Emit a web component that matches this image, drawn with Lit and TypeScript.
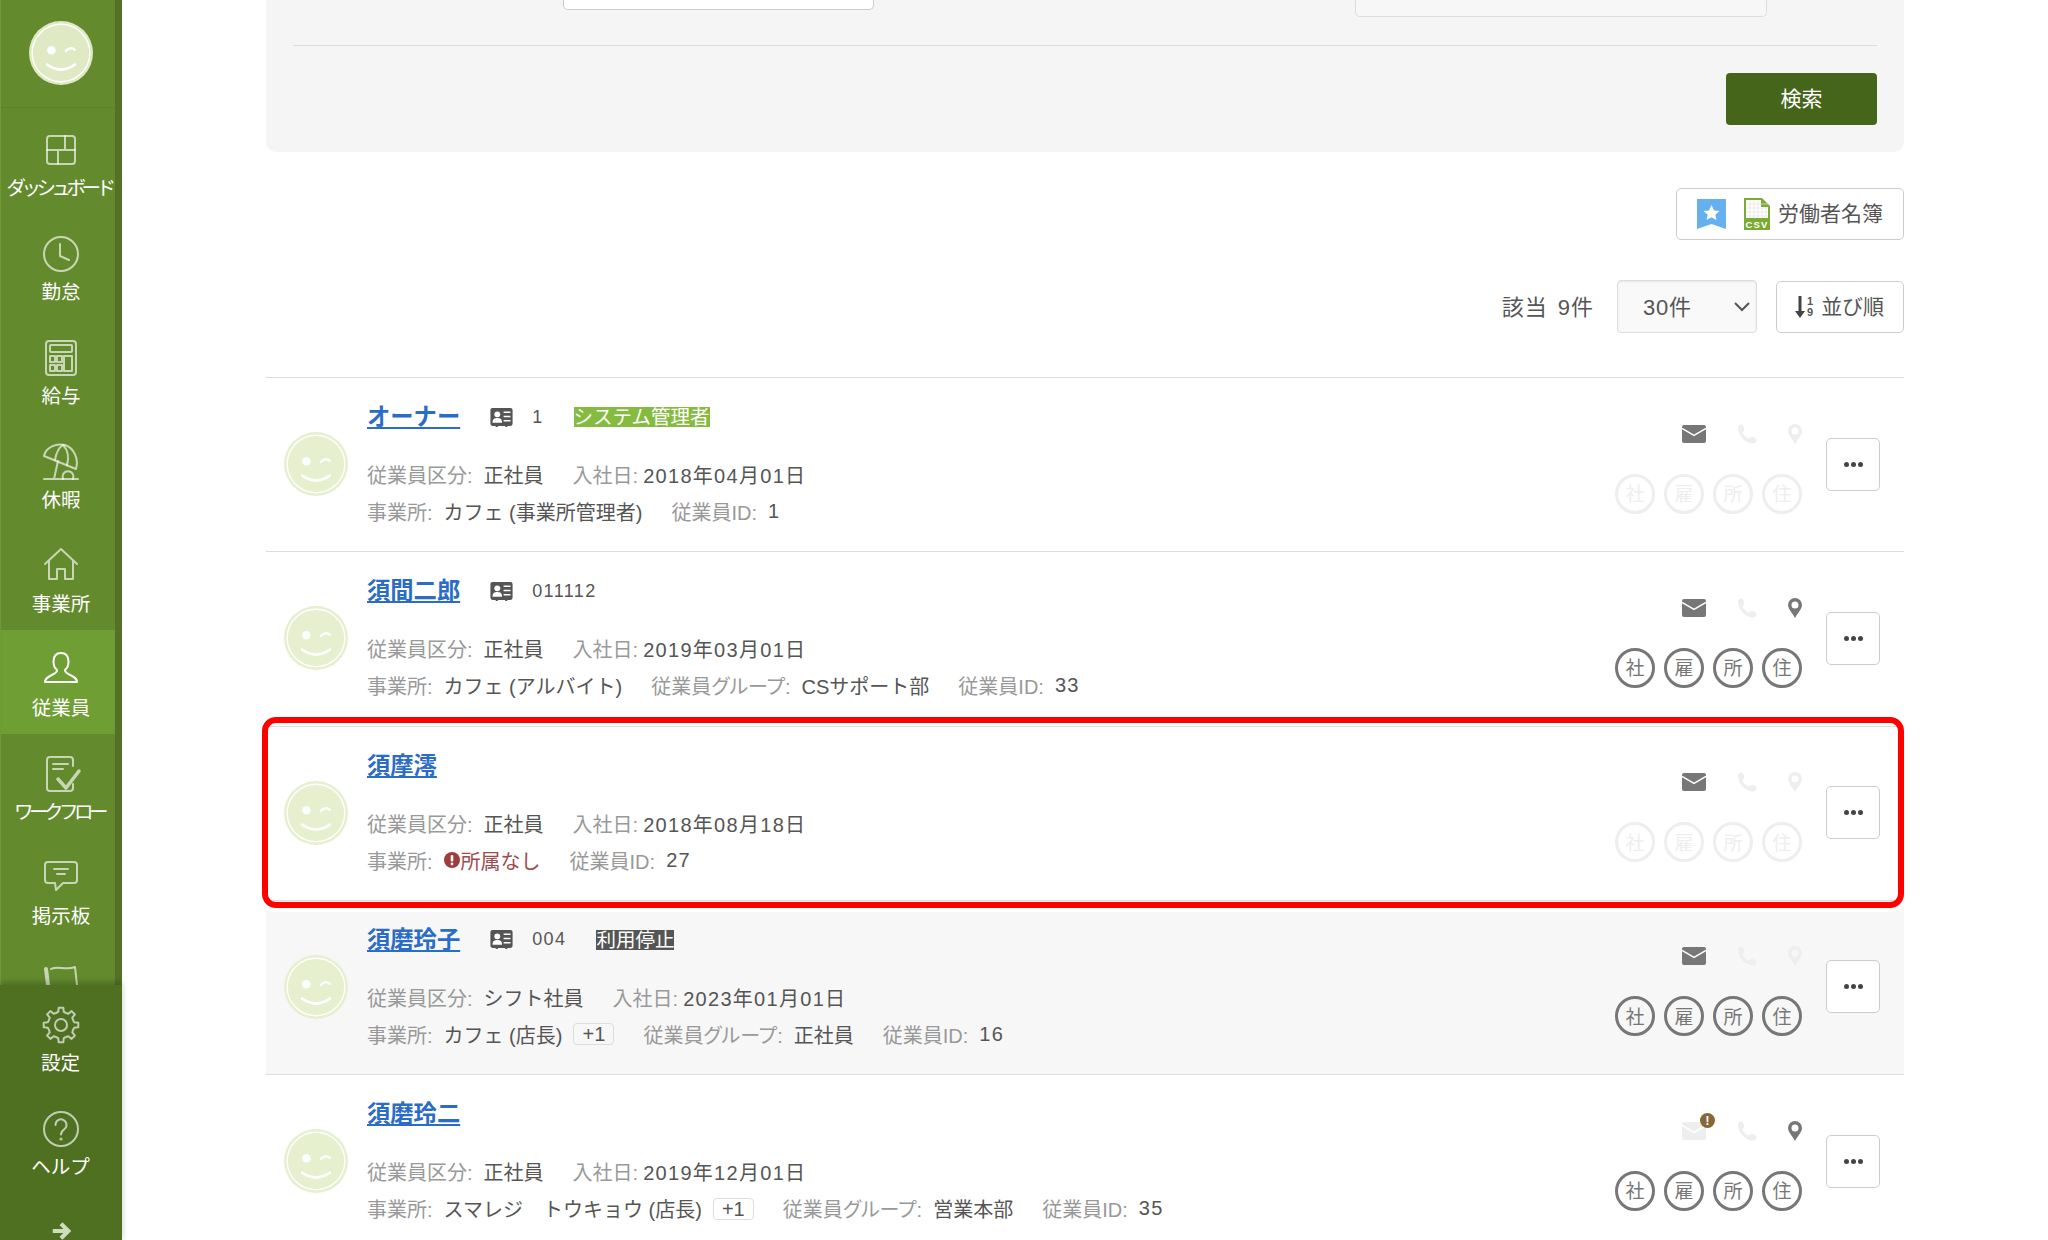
import { LitElement, html, css, svg } from "lit";
import { customElement } from "lit/decorators.js";
import { classMap } from "lit/directives/class-map.js";

type Field = { label: string; value?: string; tight?: boolean; num?: boolean; extra?: string; missing?: boolean };
type Employee = {
  name: string;
  code?: string;
  tag?: { text: string; kind: "admin" | "stop" };
  line1: Field[];
  line2: Field[];
  mail: boolean;
  mailWarn?: boolean;
  pin: boolean;
  docs: boolean;
  highlight?: boolean;
  stopped?: boolean;
};

const employees: Employee[] = [
  {
    name: "オーナー",
    code: "1",
    tag: { text: "システム管理者", kind: "admin" },
    line1: [
      { label: "従業員区分:", value: "正社員" },
      { label: "入社日:", value: "2018年04月01日", tight: true, num: true },
    ],
    line2: [
      { label: "事業所:", value: "カフェ (事業所管理者)" },
      { label: "従業員ID:", value: "1", num: true },
    ],
    mail: true,
    pin: false,
    docs: false,
  },
  {
    name: "須間二郎",
    code: "011112",
    line1: [
      { label: "従業員区分:", value: "正社員" },
      { label: "入社日:", value: "2019年03月01日", tight: true, num: true },
    ],
    line2: [
      { label: "事業所:", value: "カフェ (アルバイト)" },
      { label: "従業員グループ:", value: "CSサポート部" },
      { label: "従業員ID:", value: "33", num: true },
    ],
    mail: true,
    pin: true,
    docs: true,
  },
  {
    name: "須摩澪",
    line1: [
      { label: "従業員区分:", value: "正社員" },
      { label: "入社日:", value: "2018年08月18日", tight: true, num: true },
    ],
    line2: [
      { label: "事業所:", missing: true },
      { label: "従業員ID:", value: "27", num: true },
    ],
    mail: true,
    pin: false,
    docs: false,
    highlight: true,
  },
  {
    name: "須磨玲子",
    code: "004",
    tag: { text: "利用停止", kind: "stop" },
    line1: [
      { label: "従業員区分:", value: "シフト社員" },
      { label: "入社日:", value: "2023年01月01日", tight: true, num: true },
    ],
    line2: [
      { label: "事業所:", value: "カフェ (店長)", extra: "+1" },
      { label: "従業員グループ:", value: "正社員" },
      { label: "従業員ID:", value: "16", num: true },
    ],
    mail: true,
    pin: false,
    docs: true,
    stopped: true,
  },
  {
    name: "須磨玲二",
    line1: [
      { label: "従業員区分:", value: "正社員" },
      { label: "入社日:", value: "2019年12月01日", tight: true, num: true },
    ],
    line2: [
      { label: "事業所:", value: "スマレジ　トウキョウ (店長)", extra: "+1" },
      { label: "従業員グループ:", value: "営業本部" },
      { label: "従業員ID:", value: "35", num: true },
    ],
    mail: false,
    mailWarn: true,
    pin: true,
    docs: true,
  },
];

const gearPath = () => {
  const teeth = 8;
  const pts: string[] = [];
  for (let i = 0; i < teeth; i++) {
    const a = (i / teeth) * Math.PI * 2 - Math.PI / 2;
    const step = (Math.PI * 2) / teeth;
    const add = (r: number, t: number) =>
      pts.push(`${(18 + r * Math.cos(a + t)).toFixed(1)} ${(18 + r * Math.sin(a + t)).toFixed(1)}`);
    add(13, -step * 0.5);
    add(13.5, -step * 0.27);
    add(17.5, -step * 0.17);
    add(17.5, step * 0.17);
    add(13.5, step * 0.27);
  }
  return `M${pts.join("L")}Z`;
};

const navIcons: Record<string, unknown> = {
  dashboard: svg`<rect x="4" y="4" width="28" height="28" rx="3"/><path d="M4 18H32M22 4V18M15 18V32"/>`,
  clock: svg`<circle cx="18" cy="18" r="17"/><path d="M17 8V20L26 24"/>`,
  calc: svg`<rect x="3" y="1" width="30" height="34" rx="3"/><rect x="7" y="5" width="22" height="7" rx="1"/><rect x="7" y="16" width="5" height="6"/><rect x="14" y="16" width="5" height="6"/><rect x="21" y="16" width="8" height="15"/><rect x="7" y="25" width="5" height="6"/><rect x="14" y="25" width="5" height="6"/>`,
  beach: svg`<path d="M1 12C3 3 13-1 22 1C31 4 36 15 33 25Z"/><path d="M20 1C15 4 13 10 12 16M20 1C25 6 26 14 24 21M15 17L11 35M1 35H35"/><path d="M20 35A5.5 5.5 0 1 1 30 35"/>`,
  house: svg`<path d="M2 16L18 1L34 16M6 12V31H14V21H22V31H30V12"/>`,
  person: svg`<path d="M18 1C12.500 1 10.500 5 10.500 9.500C10.500 13.500 12 16.500 14 18C14.500 21 10 22 7 24C4 25.500 2 27 2 30H34C34 27 32 25.500 29 24C26 22 21.500 21 22 18C24 16.500 25.500 13.500 25.500 9.500C25.500 5 23.500 1 18 1Z"/>`,
  flow: svg`<path d="M30 10V4a3 3 0 0 0-3-3H7a3 3 0 0 0-3 3V32a3 3 0 0 0 3 3H27a3 3 0 0 0 3-3V28M10 8H25M10 13H20"/><path d="M15 23L23 32L36 15" stroke-width="3.500"/>`,
  chat: svg`<path d="M5 2H31a3 3 0 0 1 3 3V20a3 3 0 0 1-3 3H20L13 30L12 23H5a3 3 0 0 1-3-3V5a3 3 0 0 1 3-3Z"/><path d="M11 9H25M14 14H22"/>`,
  flag: svg`<path d="M3 5L7 36" stroke-width="4"/><path d="M8 5C15 1 22 7 32 3L35 30"/>`,
  gear: svg`<path d=${gearPath()}/><circle cx="18" cy="18" r="6"/>`,
  help: svg`<circle cx="18" cy="18" r="17"/><path d="M12.500 14A5.500 5.500 0 1 1 21 18.500C19 20 18 21 18 23.500"/><circle cx="18" cy="28" r="0.600"/>`,
};

const face = (fill: string) => svg`
  <circle cx="30" cy="30" r="30" fill=${fill}/>
  <circle cx="30" cy="30" r="27" fill="none" stroke="#fff" stroke-width="1.300"/>
  <circle cx="21" cy="27.500" r="4" fill="#fff"/>
  <path d="M34.500 28Q39 23.500 43 27" fill="none" stroke="#fff" stroke-width="2.200" stroke-linecap="round"/>
  <path d="M17 41Q30 50 43 41" fill="none" stroke="#fff" stroke-width="2.600" stroke-linecap="round"/>`;

@customElement("app-root")
export class AppRoot extends LitElement {
  static styles = css`
    :host {
      display: block;
      height: 1240px;
      overflow: hidden;
      background: #fff;
      font-family: "Liberation Sans", "Noto Sans CJK JP", sans-serif;
      color: #555;
    }
    .shell {
      display: flex;
      height: 1240px;
    }

    /* sidebar */
    .sidebar {
      width: 122px;
      flex-shrink: 0;
      display: flex;
      flex-direction: column;
      height: 1240px;
      background: #4f7021;
    }
    .nav {
      height: 985px;
      flex-shrink: 0;
      overflow: hidden;
      background: #638b2e;
      border-right: 7px solid #537227;
      border-left: 1px solid #6f9a38;
      box-sizing: border-box;
    }
    .brand {
      height: 108px;
      border-bottom: 1px solid #5b8229;
      display: flex;
      justify-content: center;
      padding: 21px 0 0 6px;
      box-sizing: border-box;
      margin-bottom: 2px;
    }
    .brand svg {
      width: 64px;
      height: 64px;
    }
    .item {
      height: 104px;
      width: 114px;
      display: flex;
      flex-direction: column;
      align-items: center;
      padding: 22px 0 0 6px;
      box-sizing: border-box;
      color: #fff;
      font-size: 19.500px;
      line-height: 28px;
      white-space: nowrap;
    }
    .item.active {
      background: #6f9f34;
    }
    .item svg {
      width: 36px;
      height: 36px;
      fill: none;
      stroke: rgba(255, 255, 255, 0.65);
      stroke-width: 2;
      stroke-linecap: round;
      stroke-linejoin: round;
      overflow: visible;
      margin-bottom: 6px;
    }
    .item.active svg {
      stroke: #fff;
    }
    .item span.tight {
      letter-spacing: -4.500px;
      margin-left: -4px;
    }
    .foot {
      position: relative;
      flex: 1;
      box-shadow: 0 -3px 6px rgba(0, 0, 0, 0.22);
      padding-top: 0;
    }
    .foot .item {
      padding-left: 7px;
    }
    .back {
      display: flex;
      justify-content: center;
      width: 114px;
      padding-left: 8px;
      box-sizing: border-box;
      margin-top: 27px;
    }
    .back svg {
      width: 22px;
      height: 22px;
      fill: none;
      stroke: #cfdcc0;
      stroke-width: 4.500;
    }

    /* main */
    .main {
      flex: 1;
      min-width: 0;
      padding: 0 144px 0 144px;
    }
    .panel {
      background: #f5f5f5;
      border-radius: 0 0 10px 10px;
      padding: 0 27px 27px 27px;
      height: 152px;
      box-sizing: border-box;
    }
    .stubs {
      display: flex;
      align-items: flex-start;
      height: 45px;
      border-bottom: 1px solid #ddd;
      box-sizing: content-box;
      padding-left: 270px;
    }
    .stub {
      box-sizing: border-box;
      border: 1px solid #ccc;
      border-top: none;
      border-radius: 0 0 5px 5px;
    }
    .stub.a {
      width: 311px;
      height: 10px;
      background: #fff;
    }
    .stub.b {
      width: 412px;
      height: 17px;
      margin-left: 481px;
      border-color: #ddd;
      background: #f7f7f7;
    }
    .actions {
      display: flex;
      justify-content: flex-end;
      padding-top: 27px;
    }
    .search {
      width: 151px;
      height: 52px;
      padding-bottom: 5px;
      box-sizing: border-box;
      background: #45651b;
      border-radius: 4px;
      color: #fff;
      font-size: 21px;
      display: flex;
      align-items: center;
      justify-content: center;
    }
    .tools {
      display: flex;
      justify-content: flex-end;
      padding-top: 36px;
    }
    .btn {
      box-sizing: border-box;
      border: 1px solid #ccc;
      border-radius: 5px;
      background: #fff;
      font-size: 21px;
      display: flex;
      align-items: center;
      white-space: nowrap;
    }
    .roster {
      width: 228px;
      height: 52px;
      padding-left: 20px;
      padding-bottom: 4px;
    }
    .roster svg {
      margin-top: 4px;
    }
    .roster .mark {
      width: 29px;
      height: 30px;
      margin-right: 18px;
    }
    .roster .csv {
      width: 26px;
      height: 32px;
      margin-right: 8px;
    }
    .sortbar {
      display: flex;
      justify-content: flex-end;
      align-items: center;
      padding-top: 40px;
      height: 53px;
      box-sizing: content-box;
      margin-bottom: 44px;
    }
    .count {
      font-size: 22px;
      letter-spacing: 1px;
      word-spacing: 3px;
      margin-right: 23px;
      padding-bottom: 3px;
    }
    .select {
      box-sizing: border-box;
      width: 140px;
      height: 53px;
      border: 1px solid #ddd;
      border-radius: 4px;
      background: #f9f9f9;
      box-shadow: inset 0 1px 2px rgba(0, 0, 0, 0.08);
      display: flex;
      align-items: center;
      justify-content: space-between;
      padding: 0 5px 0 25px;
      font-size: 22px;
      letter-spacing: 0.800px;
      margin-right: 19px;
    }
    .select span {
      padding-bottom: 3px;
    }
    .select svg {
      width: 18px;
      height: 12px;
      fill: none;
      stroke: #555;
      stroke-width: 2;
    }
    .sort {
      width: 128px;
      height: 52px;
      padding-left: 18px;
      padding-bottom: 3px;
    }
    .sort .arrow {
      width: 10px;
      height: 22px;
      fill: #444;
      margin: 3px 2px 0 0;
    }
    .sort .nums {
      display: flex;
      flex-direction: column;
      font-size: 11px;
      line-height: 11px;
      font-weight: 700;
      margin: 3px 8px 0 0;
    }

    /* rows */
    .list {
      border-top: 1px solid #ddd;
    }
    .row {
      position: relative;
      box-sizing: border-box;
      height: 174.250px;
      border-bottom: 1px solid #ddd;
      display: flex;
      align-items: center;
      padding: 0 24px 0 18px;
    }
    .row.stopped {
      background: #f7f7f7;
    }
    .avatar {
      width: 64px;
      height: 64px;
      flex-shrink: 0;
      margin: -1px 19px 0 0;
    }
    .body {
      flex: 1;
      min-width: 0;
      align-self: flex-start;
      padding-top: 24px;
    }
    .head {
      display: flex;
      align-items: center;
      height: 30px;
      margin-bottom: 24px;
    }
    .name {
      color: #2a6cc6;
      font-size: 23.300px;
      font-weight: 700;
      text-decoration: underline;
      line-height: 30px;
    }
    .card {
      width: 23px;
      height: 19px;
      margin-left: 30px;
      margin-right: 19px;
    }
    .code {
      font-size: 18px;
      letter-spacing: 1.400px;
      margin-right: 30px;
    }
    .tag {
      font-size: 19.500px;
      line-height: 20px;
      height: 20px;
      color: #fff;
    }
    .tag.admin {
      background: #85bb3f;
    }
    .tag.stop {
      background: #555;
    }
    .line {
      display: flex;
      align-items: center;
      height: 37px;
      font-size: 20px;
      white-space: nowrap;
    }
    .field {
      display: flex;
      align-items: center;
      margin-right: 29px;
    }
    .label {
      color: #999;
      margin-right: 11px;
      font-feature-settings: "palt";
    }
    .field.tight .label {
      margin-right: 5px;
    }
    .num {
      letter-spacing: 1.300px;
    }
    .more {
      box-sizing: border-box;
      border: 1px solid #ddd;
      border-radius: 4px;
      height: 22px;
      width: 41px;
      margin-left: 11px;
      font-size: 20px;
      line-height: 20px;
      text-align: center;
      background: #fff;
    }
    .stopped .more {
      background: #f7f7f7;
    }
    .missing {
      display: flex;
      align-items: center;
      color: #a04a4a;
    }
    .missing svg {
      width: 16px;
      height: 16px;
      margin-right: 1px;
    }
    .status {
      display: flex;
      flex-direction: column;
      align-items: flex-end;
      margin-top: 8px;
      margin-right: 24px;
      width: 187px;
      flex-shrink: 0;
    }
    .contact {
      display: flex;
      align-items: center;
      height: 20px;
      margin-bottom: 30px;
    }
    .contact svg {
      display: block;
    }
    .ic {
      fill: #777;
    }
    .ic.off {
      fill: #eee;
    }
    .mailbox {
      position: relative;
      width: 24px;
      height: 18px;
    }
    .mailbox svg {
      width: 24px;
      height: 18px;
    }
    .warn {
      position: absolute;
      right: -9px;
      top: -9px;
      width: 15px;
      height: 15px;
      border-radius: 50%;
      background: #85683a;
      color: #fff;
      font-size: 13px;
      font-weight: 700;
      line-height: 15px;
      text-align: center;
    }
    .phone {
      width: 20px;
      height: 20px;
      margin-left: 31px;
    }
    .pin {
      width: 14px;
      height: 20px;
      margin-left: 31px;
    }
    .docs {
      display: flex;
      gap: 9px;
    }
    .doc {
      box-sizing: border-box;
      width: 40px;
      height: 40px;
      border-radius: 50%;
      border: 3px solid #777;
      color: #777;
      font-size: 19px;
      padding-bottom: 2px;
      display: flex;
      align-items: center;
      justify-content: center;
    }
    .doc.off {
      border-color: #eee;
      color: #eee;
    }
    .dots {
      box-sizing: border-box;
      width: 54px;
      height: 53px;
      margin-top: -1px;
      border: 1px solid #ccc;
      border-radius: 5px;
      background: #fff;
      display: flex;
      align-items: center;
      justify-content: center;
      gap: 2px;
      flex-shrink: 0;
    }
    .dots i {
      width: 5px;
      height: 5px;
      border-radius: 50%;
      background: #444;
    }
    .focus {
      position: absolute;
      left: -4px;
      right: 0;
      top: -10px;
      bottom: -8px;
      border: 6px solid #f00;
      border-radius: 14px;
      box-shadow: 0 0 0 4px #fff;
      z-index: 2;
      pointer-events: none;
    }
  `;

  private navItem(icon: string, label: string, active = false, tight = false) {
    return html`<div class=${classMap({ item: true, active })}>
      <svg viewBox="0 0 36 36">${navIcons[icon]}</svg>
      <span class=${tight ? "tight" : ""}>${label}</span>
    </div>`;
  }

  private renderField(f: Field) {
    return html`<div class=${classMap({ field: true, tight: !!f.tight })}>
      <span class="label">${f.label}</span>
      ${f.missing
        ? html`<span class="missing">
            <svg viewBox="0 0 16 16">
              <circle cx="8" cy="8" r="8" fill="#a03c3c" />
              <rect x="6.700" y="3" width="2.600" height="6.500" rx="1" fill="#fff" />
              <circle cx="8" cy="12" r="1.400" fill="#fff" />
            </svg>所属なし</span
          >`
        : html`<span class=${f.num ? "num" : ""}>${f.value}</span>`}
      ${f.extra ? html`<span class="more">${f.extra}</span>` : null}
    </div>`;
  }

  private renderRow(e: Employee) {
    const off = e.docs ? "" : "off";
    return html`<div class=${classMap({ row: true, stopped: !!e.stopped })}>
      <svg class="avatar" viewBox="0 0 60 60">${face("#e6f0cf")}</svg>
      <div class="body">
        <div class="head">
          <a class="name">${e.name}</a>
          ${e.code
            ? html`<svg class="card" viewBox="0 0 21 18">
                  <path
                    d="M2 0H19a2 2 0 0 1 2 2V15a2 2 0 0 1-2 2H16V18H14V17H7V18H5V17H2a2 2 0 0 1-2-2V2a2 2 0 0 1 2-2Z"
                    fill="#555"
                  />
                  <circle cx="6.500" cy="6" r="2.800" fill="#fff" />
                  <path d="M2 14C2 10 4 9.500 6.500 9.500S11 10 11 14Z" fill="#fff" />
                  <path d="M12.500 4H19M12.500 8H19M12.500 12H19" stroke="#fff" stroke-width="1.500" />
                </svg>
                <span class="code">${e.code}</span>`
            : null}
          ${e.tag ? html`<span class="tag ${e.tag.kind}">${e.tag.text}</span>` : null}
        </div>
        <div class="line">${e.line1.map((f) => this.renderField(f))}</div>
        <div class="line">${e.line2.map((f) => this.renderField(f))}</div>
      </div>
      <div class="status">
        <div class="contact">
          <div class="mailbox">
            <svg viewBox="0 0 24 18">
              <rect class="ic ${e.mail ? "" : "off"}" width="24" height="18" rx="2" />
              <path d="M0 3.500L12 10.500L24 3.500" fill="none" stroke="#fff" stroke-width="1.500" />
            </svg>
            ${e.mailWarn ? html`<span class="warn">!</span>` : null}
          </div>
          <svg class="phone" viewBox="0 0 20 20">
            <path
              class="ic off"
              d="M1 3C1 1.500 3.500 0 5 .5C6 1 7.500 5 7.300 6C7 7 5.500 7.500 5.500 8.500C6 11 9.500 14 12 14.500C13 14.500 13.500 13 14.500 12.800C15.500 12.600 19.500 14.500 19.500 15.500C20 17 18 19.500 16.500 19.500C8 19.500 1 11.500 1 3Z"
            />
          </svg>
          <svg class="pin" viewBox="0 0 14 20">
            <path
              class="ic ${e.pin ? "" : "off"}"
              fill-rule="evenodd"
              d="M7 0A7 7 0 0 1 14 7C14 11 9 16 7 20C5 16 0 11 0 7A7 7 0 0 1 7 0ZM7 3.500A3.500 3.500 0 1 0 7 10.500A3.500 3.500 0 1 0 7 3.500Z"
            />
          </svg>
        </div>
        <div class="docs">
          ${["社", "雇", "所", "住"].map((c) => html`<span class="doc ${off}">${c}</span>`)}
        </div>
      </div>
      <div class="dots"><i></i><i></i><i></i></div>
      ${e.highlight ? html`<div class="focus"></div>` : null}
    </div>`;
  }

  render() {
    return html`<div class="shell">
      <aside class="sidebar">
        <div class="nav">
          <div class="brand"><svg viewBox="0 0 60 60">${face("#dfe9c4")}</svg></div>
          ${this.navItem("dashboard", "ダッシュボード", false, true)}
          ${this.navItem("clock", "勤怠")} ${this.navItem("calc", "給与")}
          ${this.navItem("beach", "休暇")} ${this.navItem("house", "事業所")}
          ${this.navItem("person", "従業員", true)}
          ${this.navItem("flow", "ワークフロー", false, true)}
          ${this.navItem("chat", "掲示板")} ${this.navItem("flag", "")}
        </div>
        <div class="foot">
          ${this.navItem("gear", "設定")} ${this.navItem("help", "ヘルプ")}
          <div class="back">
            <svg viewBox="0 0 24 24"><path d="M3 12H20M12 4L20 12L12 20" /></svg>
          </div>
        </div>
      </aside>
      <main class="main">
        <section class="panel">
          <div class="stubs">
            <div class="stub a"></div>
            <div class="stub b"></div>
          </div>
          <div class="actions"><div class="search">検索</div></div>
        </section>
        <div class="tools">
          <div class="btn roster">
            <svg class="mark" viewBox="0 0 29 30">
              <path d="M0 0H29V30L14.500 25L0 30Z" fill="#66b0f0" />
              <path
                d="M14.500 6L17 11.500L22.500 12L18.300 15.800L19.500 21L14.500 18.300L9.500 21L10.700 15.800L6.500 12L12 11.500Z"
                fill="#fff"
              />
            </svg>
            <svg class="csv" viewBox="0 0 26 32">
              <path d="M0 0H18L26 8V32H0Z" fill="#7aab35" />
              <path d="M2 2H17V9H24V20H2Z" fill="#fff" />
              <path
                d="M2 6H24M2 10H24M2 14H24M2 18H24M6 2V20M10 2V20M14 2V20M18 9V20M22 9V20"
                stroke="#e4e4e4"
                stroke-width="0.700"
              />
              <text
                x="13"
                y="29.500"
                text-anchor="middle"
                fill="#fff"
                font-size="9.500"
                font-weight="700"
                letter-spacing="1.200"
                font-family="Liberation Sans"
              >
                CSV
              </text>
            </svg>
            労働者名簿
          </div>
        </div>
        <div class="sortbar">
          <span class="count">該当 9件</span>
          <div class="select">
            <span>30件</span>
            <svg viewBox="0 0 18 12"><path d="M2 2L9 9L16 2" /></svg>
          </div>
          <div class="btn sort">
            <svg class="arrow" viewBox="0 0 10 22"><path d="M3.500 0H6.500V15H10L5 22L0 15H3.500Z" /></svg>
            <span class="nums"><span>1</span><span>9</span></span>
            並び順
          </div>
        </div>
        <div class="list">${employees.map((e) => this.renderRow(e))}</div>
      </main>
    </div>`;
  }
}
